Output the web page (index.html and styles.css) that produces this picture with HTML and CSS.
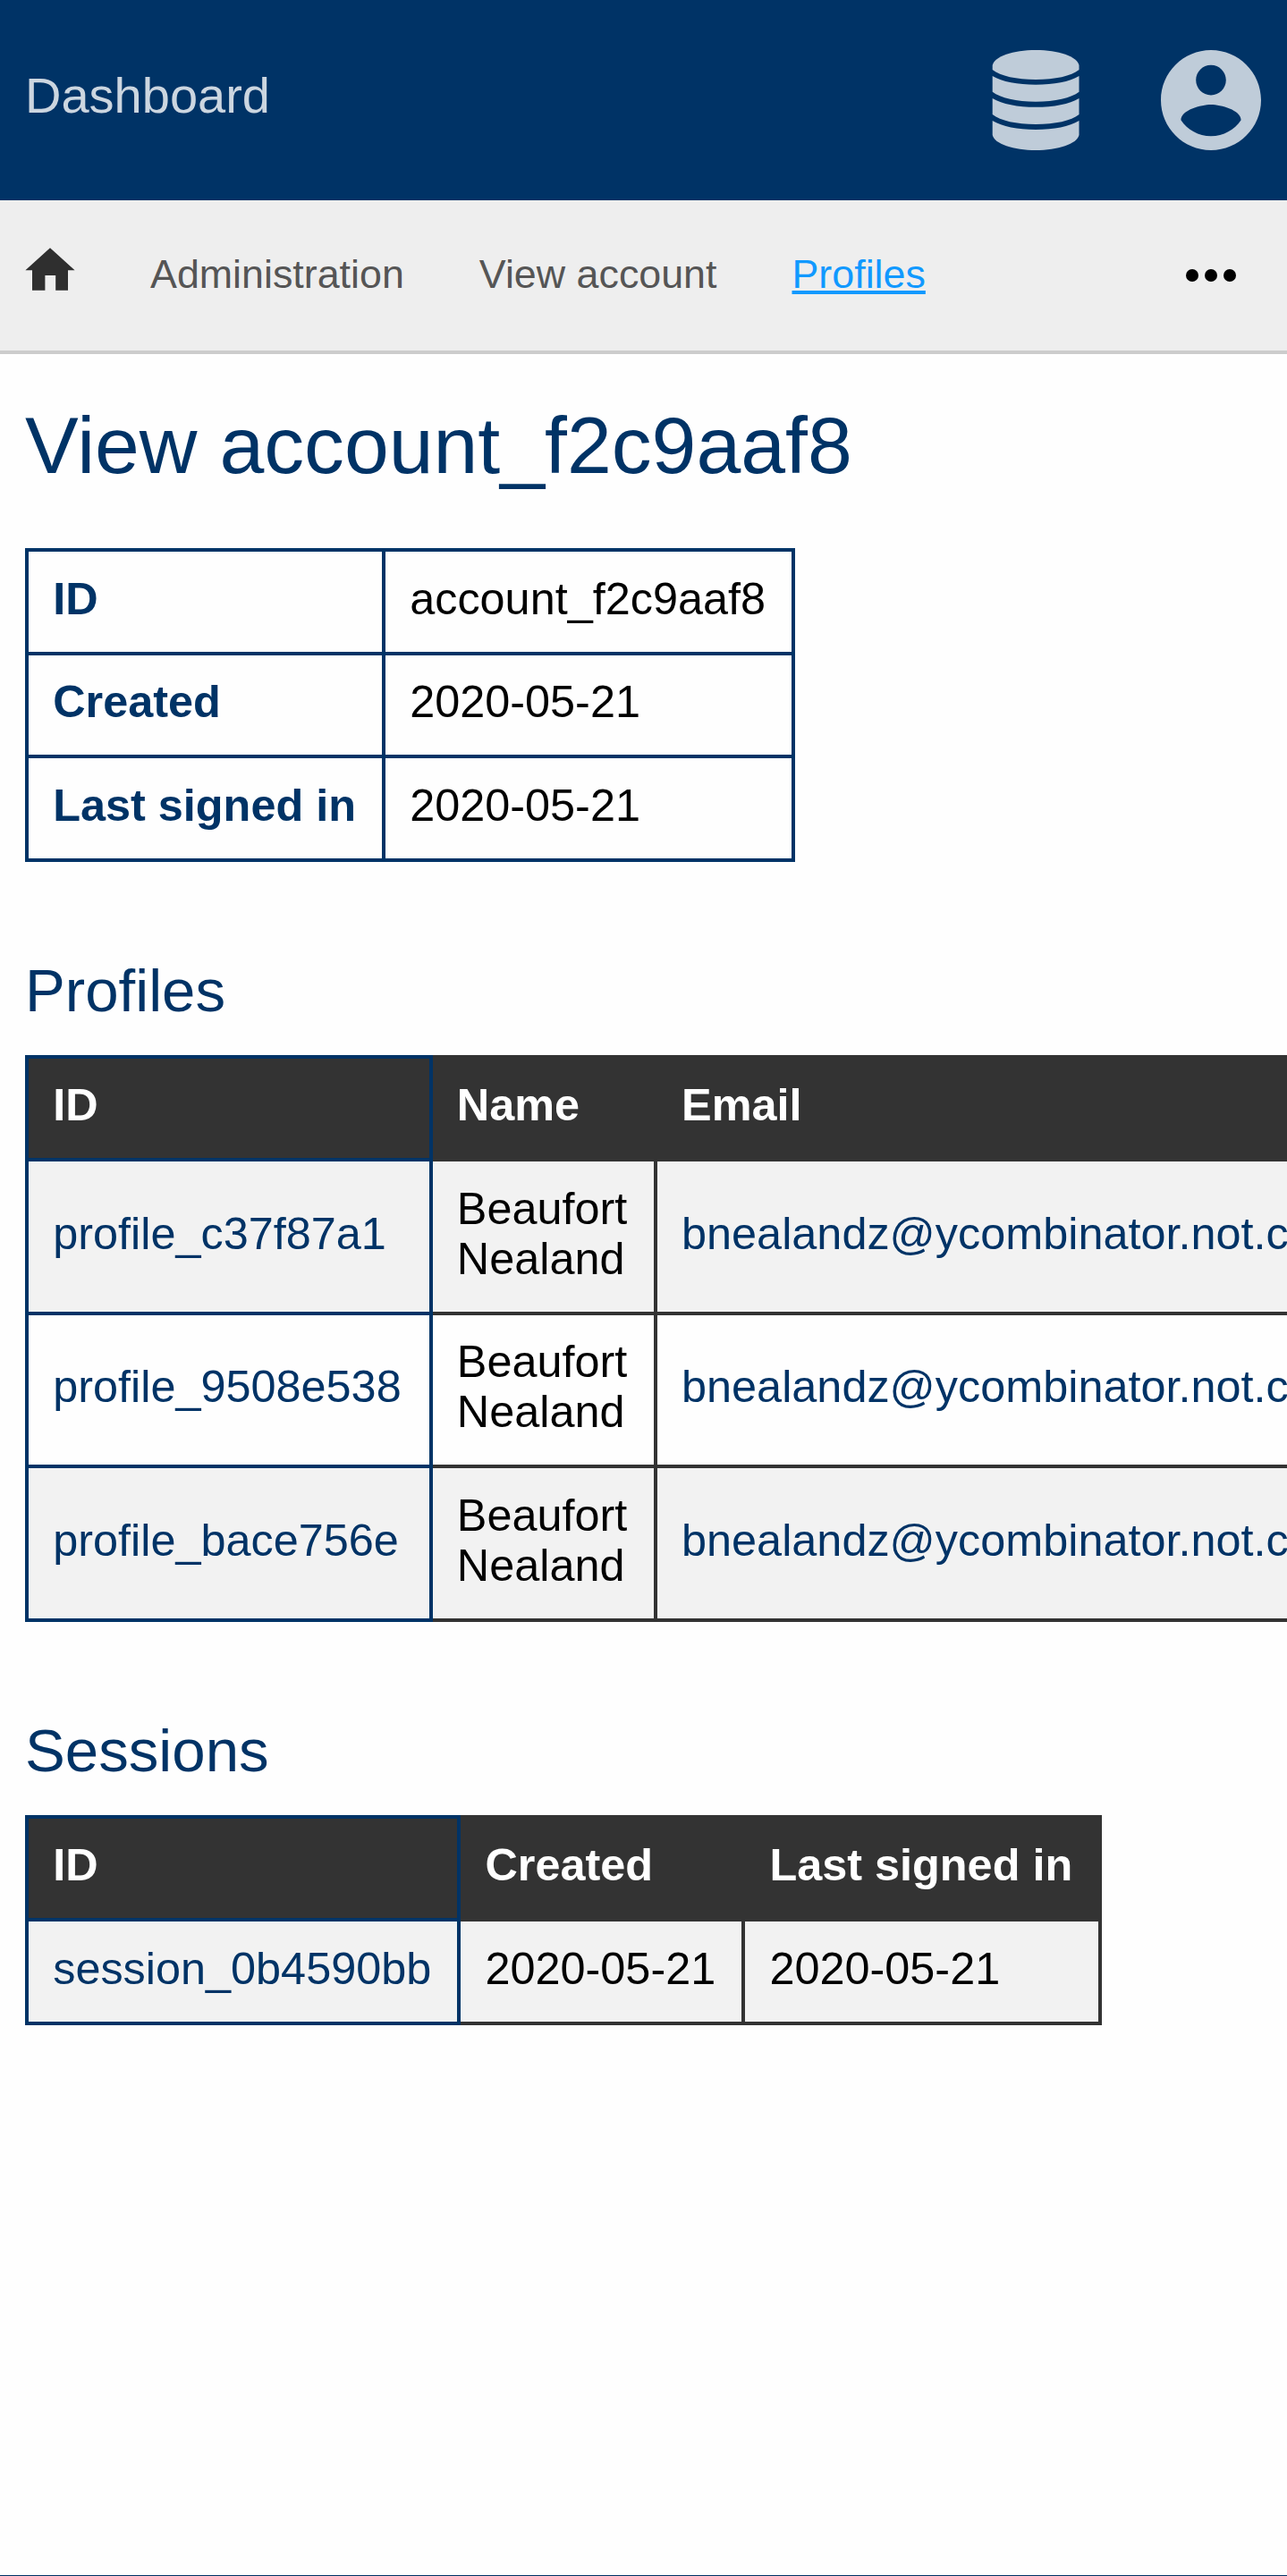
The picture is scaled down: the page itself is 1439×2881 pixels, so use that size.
FILE: index.html
```html
<!DOCTYPE html>
<html lang="en">
<head>
<meta charset="utf-8">
<title>View account</title>
<link rel="stylesheet" href="styles.css">
</head>
<body>
<header class="header">
  <a class="header-title">Dashboard</a>
  <div class="header-icons">
    <svg class="header-icon" viewBox="0 0 112 112" aria-hidden="true">
      <g transform="translate(7.7 0)">
        <path d="M0 17C2 7 23 0 48.4 0S94.800 7 96.800 17V22C88 29 70 33 48.400 33S9 29 0 22Z"/>
        <path d="M0 29C11 35.500 28 38.700 48.400 38.700S86 35.500 96.800 29V46.700C88 53.500 70 57.700 48.400 57.700S9 53.500 0 46.700Z"/>
        <path d="M0 54C11 60.500 28 63.800 48.400 63.800S86 60.500 96.800 54V72C88 79 70 83 48.400 83S9 79 0 72Z"/>
        <path d="M0 79C11 85.500 28 89 48.400 89S86 85.500 96.800 79V95C94.800 105 73 112 48.400 112S2 105 0 95Z"/>
      </g>
    </svg>
    <svg class="header-icon" viewBox="2 2 20 20" aria-hidden="true">
      <path d="M12 2C6.480 2 2 6.480 2 12s4.480 10 10 10 10-4.480 10-10S17.520 2 12 2zm0 3c1.660 0 3 1.340 3 3s-1.340 3-3 3-3-1.340-3-3 1.340-3 3-3zm0 14.200c-2.500 0-4.710-1.280-6-3.220.03-1.990 4-3.080 6-3.080 1.990 0 5.970 1.090 6 3.080-1.290 1.940-3.500 3.220-6 3.220z"/>
    </svg>
  </div>
</header>
<nav class="nav">
  <svg class="nav-home" viewBox="0 0 56 56" aria-hidden="true">
    <path d="M28 3.200L55.600 28.300H48V50.700H34.200V34H22.400V50.700H8V28.300H.4Z"/>
  </svg>
  <a class="nav-link">Administration</a>
  <a class="nav-link">View account</a>
  <a class="nav-link nav-link-active">Profiles</a>
  <svg class="nav-more" viewBox="0 0 56 56" aria-hidden="true">
    <circle cx="7" cy="28" r="7"/><circle cx="28" cy="28" r="7"/><circle cx="49" cy="28" r="7"/>
  </svg>
</nav>
<main class="main">
  <h1 class="title">View account_f2c9aaf8</h1>
  <table class="table table-details">
    <tr><th>ID</th><td>account_f2c9aaf8</td></tr>
    <tr><th>Created</th><td>2020-05-21</td></tr>
    <tr><th>Last signed in</th><td>2020-05-21</td></tr>
  </table>
  <h2 class="subtitle">Profiles</h2>
  <div class="table-scroll">
    <table class="table table-list table-profiles">
      <thead><tr><th>ID</th><th>Name</th><th>Email</th></tr></thead>
      <tbody>
        <tr><td><a>profile_c37f87a1</a></td><td>Beaufort Nealand</td><td><a>bnealandz@ycombinator.not.com</a></td></tr>
        <tr><td><a>profile_9508e538</a></td><td>Beaufort Nealand</td><td><a>bnealandz@ycombinator.not.com</a></td></tr>
        <tr><td><a>profile_bace756e</a></td><td>Beaufort Nealand</td><td><a>bnealandz@ycombinator.not.com</a></td></tr>
      </tbody>
    </table>
  </div>
  <h2 class="subtitle">Sessions</h2>
  <div class="table-scroll">
    <table class="table table-list">
      <thead><tr><th>ID</th><th>Created</th><th>Last signed in</th></tr></thead>
      <tbody>
        <tr><td><a>session_0b4590bb</a></td><td>2020-05-21</td><td>2020-05-21</td></tr>
      </tbody>
    </table>
  </div>
</main>
<footer class="footer"></footer>
</body>
</html>
```

FILE: styles.css
```css
* { box-sizing: border-box; }

body {
  display: flex;
  flex-direction: column;
  min-height: 2881px;
  margin: 0;
  background: #fefefe;
  color: #000;
  font-family: "Liberation Sans", Arial, sans-serif;
  overflow: hidden;
}

.header {
  display: flex;
  align-items: center;
  justify-content: space-between;
  height: 224px;
  padding: 0 29px 0 28px;
  background: #036;
}

.header-title {
  padding-bottom: 11px;
  color: #ccd6e0;
  font-size: 56px;
}

.header-icons { display: flex; gap: 84px; }

.header-icon {
  width: 112px;
  height: 112px;
  fill: #bfccd9;
}

.nav {
  display: flex;
  align-items: center;
  gap: 84px;
  height: 172px;
  padding: 0 57px 0 28px;
  border-bottom: 4px solid #ccc;
  background: #eee;
}

.nav-home {
  width: 56px;
  height: 56px;
  margin-bottom: 12px;
  fill: #2f2f2f;
}

.nav-link {
  padding-bottom: 3px;
  color: #555;
  font-size: 44.8px;
}

.nav-link-active { color: #19f; text-decoration: underline; }

.nav-more { width: 56px; height: 56px; margin-left: auto; }

.main { flex: 1; padding: 52px 0 0 28px; }

.title, .subtitle { margin: 0; color: #036; font-weight: normal; }

.title { margin-bottom: 65px; font-size: 89.6px; line-height: 100px; }

.subtitle { margin: 106px 0 35px; font-size: 67.2px; line-height: 75px; }

.table-scroll { overflow: hidden; }

.table {
  border-collapse: collapse;
  font-size: 50.4px;
  line-height: 56px;
}

.table th, .table td {
  padding: 24.5px 29px 31px 27.2px;
  border: 4px solid #036;
  text-align: left;
}

.table-details th { color: #036; }

.table-list th { background: #333; color: #fff; }

.table-list th, .table-list td { border-color: #333; }

.table-list th:first-child, .table-list td:first-child { border-color: #036; }

.table-list tbody tr:nth-child(odd) { background: #f2f2f2; }

.table-list a { color: #036; }

.table-profiles td:first-child { padding-right: 31px; }

.table-profiles td:nth-child(2) { padding-right: 29.5px; }

.footer { height: 1px; background: #036; }
```
